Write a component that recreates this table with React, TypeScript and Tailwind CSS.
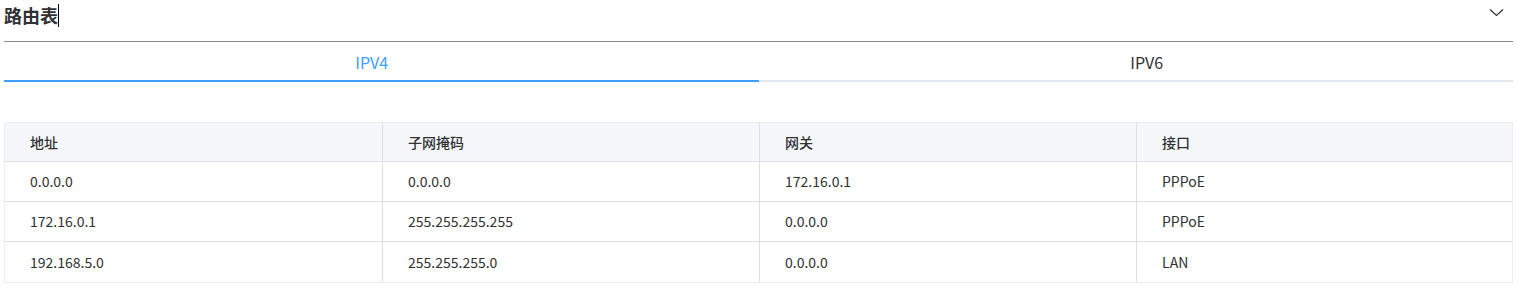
import React, { useState } from 'react';

const rows = [
  ['0.0.0.0', '0.0.0.0', '172.16.0.1', 'PPPoE'],
  ['172.16.0.1', '255.255.255.255', '0.0.0.0', 'PPPoE'],
  ['192.168.5.0', '255.255.255.0', '0.0.0.0', 'LAN'],
];

const headers = ['地址', '子网掩码', '网关', '接口'];

function App() {
  const [tab, setTab] = useState('IPV4');

  return (
    <div
      className="min-h-screen bg-white px-[4px] text-[#303133]"
      style={{ fontFamily: '"Noto Sans CJK SC", "Noto Sans", sans-serif' }}
    >
      <div className="flex h-[42px] items-start justify-between border-b border-[#8c8c8c]">
        <div className="flex items-center">
          <span className="text-[18px] font-bold leading-[30px] text-[#303133]">路由表</span>
          <span className="h-[23px] w-px bg-black" />
        </div>
        <svg className="mr-[9px] mt-[8px]" width="15" height="9" viewBox="0 0 15 9" fill="none">
          <path d="M1 1.5l6.5 6 6.5-6" stroke="#303133" strokeWidth="1.2" />
        </svg>
      </div>

      <div className="flex">
        <button
          onClick={() => setTab('IPV4')}
          className={
            'flex h-[40px] w-1/2 flex-none items-center justify-center border-b-2 pr-[19px] pt-[2px] text-[16px] ' +
            (tab === 'IPV4' ? 'border-[#409eff] text-[#409eff]' : 'border-[#e4e7ed] text-[#303133]')
          }
        >
          IPV4
        </button>
        <button
          onClick={() => setTab('IPV6')}
          className={
            'flex h-[40px] w-1/2 flex-none items-center justify-center border-b-2 pl-[22px] pt-[2px] text-[16px] ' +
            (tab === 'IPV6' ? 'border-[#409eff] text-[#409eff]' : 'border-[#e4e7ed] text-[#303133]')
          }
        >
          IPV6
        </button>
      </div>

      <div className="mt-[40px] border border-[#ebeef5] text-[14px]">
        <div className="grid grid-cols-[378px_377px_377px_1fr] bg-[#f5f7fa] font-medium">
          {headers.map((h, i) => (
            <div
              key={h}
              className={
                'flex h-[39px] items-center border-b border-[#dcdfe6] pl-[25px] ' +
                (i < 3 ? 'border-r' : '')
              }
            >
              {h}
            </div>
          ))}
        </div>
        {rows.map((r, ri) => (
          <div key={ri} className="grid grid-cols-[378px_377px_377px_1fr]">
            {r.map((c, i) => (
              <div
                key={i}
                className={
                  'flex h-[40px] items-center border-[#dcdfe6] pl-[25px] ' +
                  (i < 3 ? 'border-r ' : '') +
                  (ri < rows.length - 1 ? 'border-b' : '')
                }
              >
                {c}
              </div>
            ))}
          </div>
        ))}
      </div>
    </div>
  );
}

export default App;
